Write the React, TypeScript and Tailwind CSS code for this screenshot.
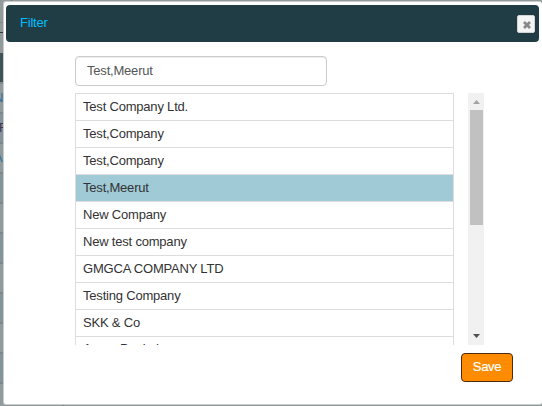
const companies = [
  'Test Company Ltd.',
  'Test,Company',
  'Test,Company',
  'Test,Meerut',
  'New Company',
  'New test company',
  'GMGCA COMPANY LTD',
  'Testing Company',
  'SKK & Co',
  'Aaron Pankaj',
];

const SELECTED = 3;

function Backdrop() {
  return (
    <div className="absolute inset-0 flex flex-col bg-[#929b9b] text-[13px] leading-[28px]">
      <div className="h-[22px] w-3 shrink-0 border-r border-[#6f7979]" />
      <div className="h-[11px] shrink-0 border-y border-t-[#7f8989] border-b-[#30383a]" />
      <div className="h-[20px] shrink-0" />
      <div className="h-[29px] shrink-0 bg-[#3d5359]" />
      <div className="h-[2px] shrink-0 bg-[#838c8c]" />
      {['N', 'F', 'A', '', '', '', '', '', '', '', ''].map((mark, i) => (
        <div
          key={i}
          className={`flex h-[30px] shrink-0 overflow-hidden border-b-2 border-[#7d8788] ${
            i % 2 ? 'bg-[#84949a]' : 'bg-[#929b9b]'
          } ${i === 1 ? 'text-[#40364a]' : 'text-[#2f6c9d]'}`}
        >
          <div className="w-16 border-r-2 border-[#7d8788]">
            <span className={i === 1 ? '-ml-px' : '-ml-[6px]'}>{mark}</span>
          </div>
        </div>
      ))}
    </div>
  );
}

function ListScrollbar() {
  return (
    <div className="flex h-[252px] w-4 flex-col bg-[#f1f1f1]">
      <svg className="h-[17px] w-4 shrink-0" viewBox="0 0 16 17">
        <path d="M5 11h7L8.5 7z" fill="#a3a3a3" />
      </svg>
      <div className="ml-[2px] h-[115px] w-[13px] bg-[#c1c1c1]" />
      <div className="grow" />
      <svg className="h-[17px] w-4 shrink-0" viewBox="0 0 16 17">
        <path d="M5 6h7L8.5 10z" fill="#505050" />
      </svg>
    </div>
  );
}

export default function App() {
  return (
    <div className="relative h-[406px] w-[542px] overflow-hidden font-['Liberation_Sans',Arial,sans-serif] text-[13px] tracking-[-0.2px]">
      <Backdrop />
      <div className="relative ml-[3px] mt-px h-[404px] w-[539px] rounded-[3px] border border-r-0 border-[#c9cccc] bg-white pl-[2px] pt-[3px]">
        <header className="flex h-[37px] w-[533px] items-center justify-between rounded-[4px] bg-[#203d46] pl-[14px] pr-[4px]">
          <h1 className="pb-[2px] text-[13px] text-[#00bfff]">Filter</h1>
          <button className="flex h-[18px] w-[18px] items-center justify-center rounded-[2px] border border-[#d3d3d3] bg-[#f5f5f5]">
            <svg className="ml-[2px] mt-[2px] h-2 w-2" viewBox="0 0 8 8">
              <path d="M1 1l6 6M7 1L1 7" stroke="#888" strokeWidth="2.8" />
            </svg>
          </button>
        </header>
        <main className="pl-[69px] pt-[14px]">
          <input
            className="block h-[30px] w-[252px] rounded-[4px] border border-[#ccc] bg-white pb-[2px] pl-[11px] pr-[10px] text-[13px] tracking-[-0.2px] text-[#555] shadow-[inset_0_1px_1px_rgba(0,0,0,0.075)]"
            defaultValue="Test,Meerut"
          />
          <div className="mt-[7px] flex h-[252px] gap-[14px]">
            <ul className="w-[379px] overflow-hidden border-x border-t border-[#ddd] text-[#333]">
              {companies.map((name, i) => (
                <li
                  key={i}
                  className={`h-[27px] border-b border-[#ddd] pl-[7px] ${
                    i === companies.length - 1 ? 'leading-[24px]' : 'leading-[26px]'
                  } ${i === SELECTED ? 'bg-[#9fcad6]' : 'bg-white'}`}
                >
                  {name}
                </li>
              ))}
            </ul>
            <ListScrollbar />
          </div>
          <button className="ml-[386px] mt-[8px] flex h-[29px] w-[52px] items-center justify-center rounded-[4px] border border-[#4c2a12] bg-[#ff8c00] pb-px text-[13px] tracking-[-0.3px] text-white [-webkit-text-stroke:0.2px_white]">
            Save
          </button>
        </main>
      </div>
    </div>
  );
}
